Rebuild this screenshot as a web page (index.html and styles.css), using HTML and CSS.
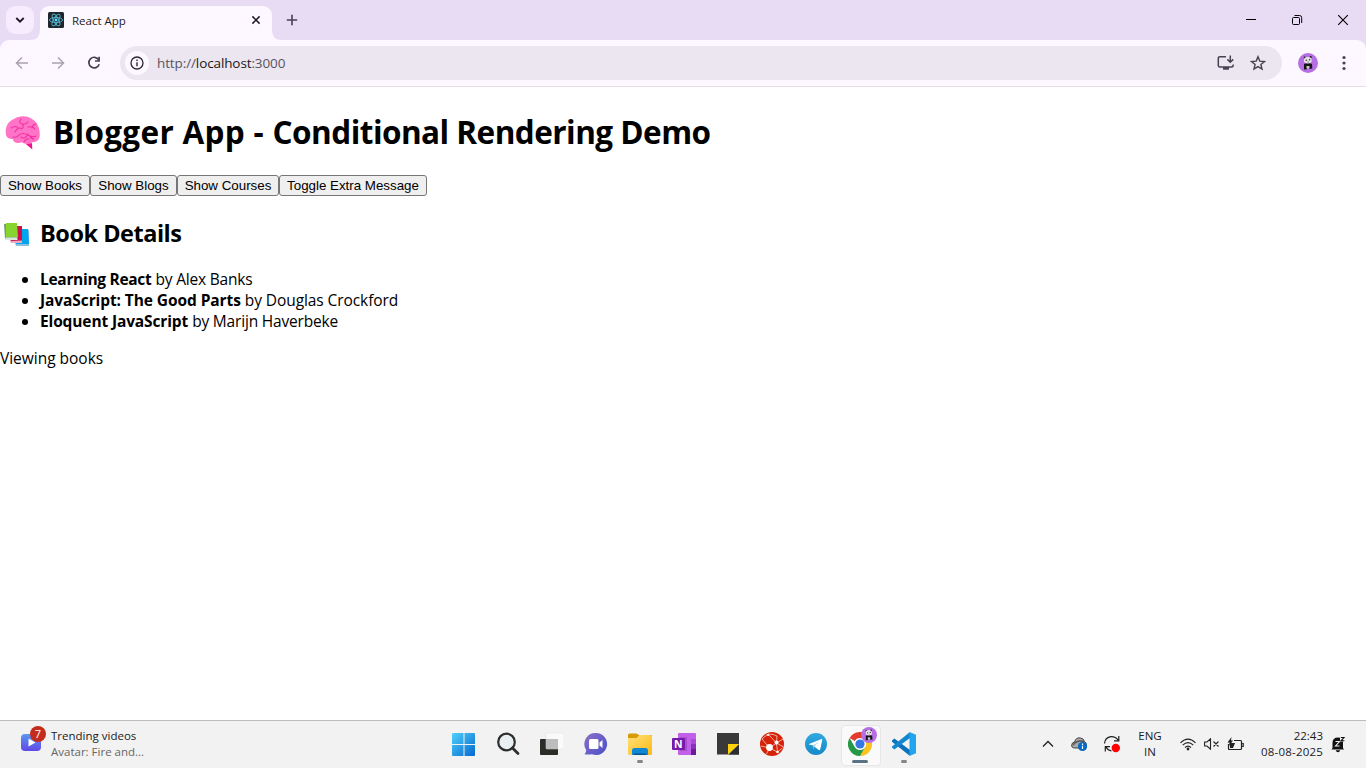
FILE: index.html
```html
<!DOCTYPE html>
<html lang="en">
<head>
<meta charset="utf-8">
<title>React App</title>
<link rel="stylesheet" href="styles.css">
</head>
<body>
<svg width="0" height="0" class="defs">
  <defs>
    <linearGradient id="gWin" x1="0" y1="0" x2="1" y2="1"><stop offset="0" stop-color="#4fd0fb"/><stop offset="1" stop-color="#0669cd"/></linearGradient>
    <linearGradient id="gChat" x1="0" y1="0" x2="1" y2="1"><stop offset="0" stop-color="#8b6fc9"/><stop offset="1" stop-color="#4a50c8"/></linearGradient>
    <linearGradient id="gVid" x1="0" y1="0" x2="0" y2="1"><stop offset="0" stop-color="#5a97ee"/><stop offset="1" stop-color="#6048e8"/></linearGradient>
    <linearGradient id="gFold" x1="0" y1="0" x2="1" y2="1"><stop offset="0" stop-color="#ffe07a"/><stop offset="1" stop-color="#fdb913"/></linearGradient>
    <linearGradient id="gTel" x1="0" y1="0" x2="0" y2="1"><stop offset="0" stop-color="#31a9e0"/><stop offset="1" stop-color="#1689c9"/></linearGradient>
    <symbol id="panda" viewBox="0 0 20 20">
      <circle cx="10" cy="10" r="10" fill="#b56ee3"/>
      <path d="M6 11q4-2 8 0l.3 4.600-3.300.4v-2.500h-2v2.800l-3 .2z" fill="#151515"/>
      <path d="M8.500 13h3v2.500h-3z" fill="#cfc4d6"/>
      <circle cx="6.800" cy="4.700" r="1.100" fill="#222"/><circle cx="12.700" cy="4.200" r="1.100" fill="#222"/>
      <ellipse cx="9.800" cy="7.200" rx="3.900" ry="3.300" fill="#e5e3e5"/>
      <circle cx="8.300" cy="7.300" r=".8" fill="#333"/><circle cx="11.600" cy="6.800" r=".8" fill="#333"/><circle cx="10.100" cy="9" r=".5" fill="#222"/>
    </symbol>
  </defs>
</svg>
<header class="tabstrip">
  <div class="tab-search"><svg width="10" height="8" viewBox="0 0 10 8"><path d="M1.300 2l3.700 3.700L8.700 2" fill="none" stroke="#1f1a24" stroke-width="1.900"/></svg></div>
  <div class="tab">
    <svg class="tab-foot" width="252" height="10" viewBox="0 0 252 10"><path d="M0 10Q10 10 10 0H242Q242 10 252 10z" fill="#fdf7ff"/></svg>
    <svg width="16" height="16" viewBox="0 0 16 16"><rect width="16" height="16" rx="1.500" fill="#20232a"/><g fill="none" stroke="#50b5cf" stroke-width=".9"><ellipse cx="8" cy="8" rx="6.600" ry="2.500"/><ellipse cx="8" cy="8" rx="6.600" ry="2.500" transform="rotate(60 8 8)"/><ellipse cx="8" cy="8" rx="6.600" ry="2.500" transform="rotate(120 8 8)"/></g><circle cx="8" cy="8" r="1.400" fill="#61dafb"/></svg>
    <span class="tab-title">React App</span>
    <svg class="tab-close" width="10" height="10" viewBox="0 0 10 10"><path d="M1.400 1.400l7.200 7.200M8.600 1.400L1.400 8.600" stroke="#1f1a24" stroke-width="1.500"/></svg>
  </div>
  <svg class="new-tab" width="12" height="12" viewBox="0 0 12 12"><path d="M6 .8v10.400M.8 6h10.400" stroke="#474151" stroke-width="1.600"/></svg>
  <div class="win-controls">
    <svg width="46" height="40" viewBox="0 0 46 40"><path d="M18 19.500h10" stroke="#000"/></svg>
    <svg width="46" height="40" viewBox="0 0 46 40"><rect x="18.500" y="17.500" width="7" height="7" rx="1" fill="none" stroke="#000"/><path d="M20.500 15.500h5q2.200 0 2.200 2.200v5.300" fill="none" stroke="#000"/></svg>
    <svg width="46" height="40" viewBox="0 0 46 40"><path d="M18.200 15.200l9.600 9.600M27.800 15.200l-9.600 9.600" stroke="#000" stroke-width="1.100"/></svg>
  </div>
</header>
<nav class="toolbar-bg">
  <div class="toolbar">
    <svg class="nav-icon" width="16" height="16" viewBox="0 0 16 16"><path d="M14 8H3M8 2.500L2.500 8 8 13.500" fill="none" stroke="#aaa3b0" stroke-width="1.500"/></svg>
    <svg class="nav-icon" width="16" height="16" viewBox="0 0 16 16"><path d="M2 8h11M8 2.500l5.500 5.500L8 13.500" fill="none" stroke="#aaa3b0" stroke-width="1.500"/></svg>
    <svg class="nav-icon" width="16" height="16" viewBox="0 0 16 16"><path d="M12.700 4.800A5.300 5.300 0 1 0 13.200 9.300" fill="none" stroke="#474151" stroke-width="1.700"/><path d="M13.100 1.800v4.200H9" fill="none" stroke="#474151" stroke-width="1.700"/></svg>
    <div class="omnibox">
      <span class="site-info"><svg width="14" height="14" viewBox="0 0 14 14"><circle cx="7" cy="7" r="6" fill="none" stroke="#2c2731" stroke-width="1.300"/><path d="M7 6.200v4M7 3.600v1.500" stroke="#2c2731" stroke-width="1.400"/></svg></span>
      <span class="url">http://<b>localhost</b>:3000</span>
      <svg class="install" width="18" height="16" viewBox="0 0 18 16"><path d="M9 1.800H3q-1.700 0-1.700 1.500v7.200q0 1.500 1.700 1.500h11.500q1.700 0 1.700-1.500V9.500" fill="none" stroke="#474151" stroke-width="1.500"/><path d="M6 12h6v2.700H6z" fill="#474151"/><path d="M13.300 0.500v6.500M10.400 4.400l2.900 2.900 2.900-2.900" fill="none" stroke="#474151" stroke-width="1.500"/></svg>
      <svg width="16" height="16" viewBox="0 0 16 16"><path d="M8 1.700l1.800 4.400 4.700.4-3.600 3 1.100 4.600L8 11.600l-4 2.500 1.100-4.600-3.600-3 4.700-.4z" fill="none" stroke="#474151" stroke-width="1.400"/></svg>
    </div>
    <svg class="profile" width="20" height="20"><use href="#panda"/></svg>
    <svg class="menu" width="4" height="16" viewBox="0 0 4 16"><g fill="#474151"><circle cx="2" cy="2.500" r="1.600"/><circle cx="2" cy="8" r="1.600"/><circle cx="2" cy="13.500" r="1.600"/></g></svg>
  </div>
</nav>
<main class="page">
  <h1><svg class="brain" width="36" height="34" viewBox="0 0 36 34"><path d="M21 27l6 .2 .3 6.300-5.800-5z" fill="#ef1090"/><path d="M1 19C-.5 12 3 5 9 3 14-.7 22-.3 26 2.500 31 4.500 35 11 34.700 18c.5 5-2 8-6.700 8-3 2.500-8 2.500-11 .2-4 1.800-9 .5-9.300-3.500C4 23.500 1.800 21.500 1 19z" fill="#ff74c6"/><g fill="none" stroke="#f22e9f" stroke-width="1.100" stroke-linecap="round"><path d="M6 12q5-3 7 0M10 16q3-6 7-3M16 3q-3 4 1 5t6-2M18 8v4M23 11q5-1 7 2M27 12q1-4 4-4M8 21q4 1 6-2 4-3 9 0t8 1M23 18q-3 6-7 3M29 23q-3 0-4-3M19 26q2-4 5-3"/></g></svg><span class="title"><span class="lead">Blogger App - </span>Conditional Rendering Demo</span></h1>
  <div class="buttons"><button class="b1">Show Books</button><button class="b2">Show Blogs</button><button class="b3">Show Courses</button><button class="b4">Toggle Extra Message</button></div>
  <h2><svg class="books" width="26" height="24" viewBox="0 0 26 24"><path d="M11 20l1-2h12V7h1v16H12z" fill="#8dbfe0"/><path d="M12 6h12l1 15H12z" fill="#00a4ef"/><path d="M5 16h13v4H7z" fill="#e5acc1"/><path d="M8 3h10v14.500l-11 .5z" fill="#cf0f4c"/><path d="M0 1h13v15H1z" fill="#7a9a7d"/><path d="M1.500 14.500h12V17H1z" fill="#d9ead9"/><path d="M2 0h11l1 14H2z" fill="#86d62f"/></svg><span>Book Details</span></h2>
  <ul>
    <li><b class="t1">Learning React</b><span class="a1">by Alex Banks</span></li>
    <li><b class="t2">JavaScript: The Good Parts</b><span class="a2">by Douglas Crockford</span></li>
    <li><b class="t3">Eloquent JavaScript</b><span class="a3">by Marijn Haverbeke</span></li>
  </ul>
  <p class="viewing">Viewing books</p>
</main>
<footer class="taskbar">
  <div class="widget">
    <div class="video"><svg width="20" height="17" viewBox="0 0 20 17"><rect width="20" height="17" rx="4" fill="url(#gVid)"/><path d="M7.500 4.500l7 4-7 4z" fill="#fff"/></svg><span class="count">7</span></div>
    <div class="news"><div>Trending videos</div><div class="sub">Avatar: Fire and...</div></div>
  </div>
  <div class="apps">
    <div class="app"><svg width="24" height="24" viewBox="0 -1 24 24"><path d="M0 1q0-1 1-1h10.500v11H0zM12.500 0H22q1 0 1 1v10H12.500zM0 12h11.500v11H1q-1 0-1-1zM12.500 12H23V22q0 1-1 1h-9.500z" fill="url(#gWin)"/></svg></div>
    <div class="app"><svg width="24" height="24" viewBox="0 0 24 24"><circle cx="10.500" cy="10" r="8.300" fill="#eaf0f1" stroke="#2c2d2d" stroke-width="2.200"/><path d="M16.500 16l5.500 5.500" stroke="#2c2d2d" stroke-width="2.800" stroke-linecap="round"/></svg></div>
    <div class="app"><svg width="24" height="24" viewBox="0 -1 24 24"><rect x="0" y="6" width="18" height="16" rx="1" fill="#2b2b28"/><rect x="6" y="0" width="18" height="16" rx="1" fill="#fafafa" stroke="#e0e0e0" stroke-width=".5"/><path d="M6 6h12v10H7q-1 0-1-1z" fill="#bdbdbd"/></svg></div>
    <div class="app"><svg width="24" height="24" viewBox="0 0 24 24"><path d="M12 1a11 11 0 1 1-4 21.200Q3.500 22.700 .5 22.200q2-2 1.500-4.500A11 11 0 0 1 12 1z" fill="url(#gChat)"/><rect x="5" y="7" width="9.500" height="10" rx="1.500" fill="#fff"/><path d="M15.500 10.500l3-2.500v8l-3-2.500z" fill="#fff"/></svg></div>
    <div class="app running"><svg width="24" height="24" viewBox="0 -1 24 24"><path d="M0 2q0-1.500 1.500-1.500h7L11 2H24v5H0z" fill="#d99a08"/><path d="M0 5h8.500l3-3H22.500Q24 2 24 3.500V20.500q0 1.500-1.500 1.500H1.500Q0 22 0 20.500z" fill="url(#gFold)"/><path d="M4 22v-4.500q0-2.500 2.500-2.500h11q2.500 0 2.500 2.500V22z" fill="#1186d4"/><path d="M6 22v-1.500h12v1.500z" fill="#065590"/></svg></div>
    <div class="app"><svg width="24" height="24" viewBox="0 0 24 24"><rect x="6" y="1" width="18" height="22" rx="1" fill="#c160e8"/><path d="M19 7h5v5h-5z" fill="#a64bda"/><path d="M19 12h5v5h-5z" fill="#8632bd"/><path d="M19 17h5v6h-5z" fill="#6a1e98"/><path d="M8 5h7v14H8z" fill="#943bb9" opacity=".5"/><rect y="6" width="13" height="12" rx="1" fill="#7719aa"/></svg><span class="onenote">N</span></div>
    <div class="app"><svg width="24" height="24" viewBox="0 0 24 24"><path d="M1 1h22v10.500L12 22.500H1z" fill="#393939"/><path d="M23 12v10.700H12z" fill="#2b2d33"/><path d="M12 12h11L12 22.500z" fill="#ffd20c"/></svg></div>
    <div class="app"><svg width="24" height="24" viewBox="0 0 24 24"><circle cx="12" cy="12" r="12" fill="#d52208"/><g stroke="#f6cfc7" stroke-width=".8" fill="none"><path d="M9.500 16L2 7 8 2l8.500 9L23 7M9.500 16l7-5 1 9-8-4M9.500 16L1 14M9.500 16l-3 6M8 2q6 0 9 2l-.5 7 7 4M17.500 20l5-4"/></g><g fill="#fff"><circle cx="9.500" cy="15.500" r="3.400"/><circle cx="16.500" cy="10.500" r="2"/><circle cx="17.500" cy="20" r="1.300"/><circle cx="8" cy="3" r="1.100"/></g></svg></div>
    <div class="app"><svg width="24" height="24" viewBox="0 0 24 24"><circle cx="12" cy="12" r="11" fill="url(#gTel)"/><path d="M5 12l12.500-5q1-.2.700 1l-2 9.500q-.4 1-1.400.5L9 13.500l-3.800-.9q-.7-.3-.2-.6z" fill="#fff"/><path d="M9 13.500l6.500-4.500-5 5.200-.6 3z" fill="#b5d8ec"/></svg></div>
    <div class="app running active"><svg width="24" height="24" viewBox="0 0 24 24"><circle cx="12" cy="12" r="12" fill="#fff"/><path d="M1.600 6A12 12 0 0 1 22.400 6H12a6 6 0 0 0-5.200 3z" fill="#e33b2e"/><path d="M22.400 6A12 12 0 0 1 12 24l5.200-9a6 6 0 0 0 0-6L12 6z" fill="#fcc31e"/><path d="M12 24A12 12 0 0 1 1.600 6l5.200 9a6 6 0 0 0 10.400 0z" fill="#279847"/><circle cx="12" cy="12" r="5.700" fill="#fff"/><circle cx="12" cy="12" r="4.600" fill="#3578e5"/></svg><svg class="badge" width="16" height="16"><use href="#panda"/></svg></div>
    <div class="app running"><svg width="24" height="24" viewBox="0 0 24 24"><path d="M0 8.500L2.300 6.500 18 18v6L0 9.800z" fill="#0a72bd"/><path d="M0 14.500L18 0v6L2.300 17.500 0 15.500z" fill="#1287d0"/><path d="M17.500 0L24 2.700v18.600L17.500 24z" fill="#23a5ee"/></svg></div>
  </div>
  <div class="tray">
    <svg class="chev" width="12" height="8" viewBox="0 0 12 8"><path d="M1 6.500l5-5 5 5" fill="none" stroke="#222" stroke-width="1.300"/></svg>
    <svg class="cloud" width="17" height="16" viewBox="0 0 17 16"><path d="M4 12Q0 12 .8 8.500 1 6.500 3.500 6 5 1 9.500 2q3 .3 4 3.500 2 1 2 4L9 12z" fill="#aaa" stroke="#333" stroke-width=".9"/><path d="M2 9Q7 3 13.500 6" stroke="#555" stroke-width="1.500" fill="none"/><circle cx="11.500" cy="10.500" r="4.600" fill="#0868c4"/><path d="M11.500 9.800v3.300M11.500 7.600v1.300" stroke="#fff" stroke-width="1.200"/></svg>
    <svg class="sync" width="18" height="18" viewBox="0 0 18 18"><g fill="none" stroke="#202020" stroke-width="1.200"><path d="M1.500 8.500Q2 2.500 8 1.700q4.500-.2 7 3.300M15.800 1v4.800H11M7 11.600H2.300v4.800M3 12q2 3.500 5.500 4"/></g><circle cx="12.800" cy="13" r="4.200" fill="red"/></svg>
    <div class="lang"><div>ENG</div><div>IN</div></div>
    <svg class="wifi" width="16" height="13" viewBox="0 0 16 13"><g fill="none" stroke="#222" stroke-width="1.100"><path d="M.5 4.800Q8-2.500 15.500 4.800M2.700 7.200Q8 2 13.300 7.200M5 9.500Q8 6.600 11 9.500"/></g><circle cx="8" cy="11" r="1.400" fill="#222"/></svg>
    <svg class="vol" width="16" height="12" viewBox="0 0 16 12"><path d="M.6 4H3L6.500.8v10.400L3 8H.6zM9.500 3.500l5 5M14.500 3.500l-5 5" fill="none" stroke="#222" stroke-width="1.100"/></svg>
    <svg class="batt" width="17" height="14" viewBox="0 0 17 14"><path d="M7 3.500h6.500q1 0 1 1v7q0 1-1 1H2.500q-1 0-1-1V7M15.200 6.500h1v3h-1" fill="none" stroke="#222" stroke-width="1.200"/><path d="M3 6h5l-2 5H3z" fill="#222"/><path d="M4.500 0L.5 5.500h2L2 9l4-5.500H4z" fill="#222"/></svg>
    <div class="clock"><div class="time">22:43</div><div class="date">08-08-2025</div></div>
    <div class="bell"><svg width="15" height="17" viewBox="0 0 15 17"><path d="M1.500 12V7Q1.500 1.500 7 1.500T12 7v5l1 1.500H.5zM4.700 14.300h4.500q-.5 1.900-2.200 1.900t-2.300-1.900z" fill="#111"/><path d="M4.500 5.500h4l-4 4.500h4" fill="none" stroke="#f3f3f3" stroke-width="1.100"/><path d="M9 .5h5v5H9z" fill="#f3f3f3"/><path d="M9.800 1.500h3.200l-3 3.300h3.400" fill="none" stroke="#111" stroke-width="1.100"/></svg></div>
  </div>
</footer>
</body>
</html>
```
FILE: styles.css
```css
* { box-sizing: border-box; }
body { margin: 0; width: 1366px; height: 768px; overflow: hidden; display: flex; flex-direction: column; background: #fff; color: #000; font-family: "Open Sans", "Noto Sans", sans-serif; }
svg { display: block; flex: none; }
.defs { position: absolute; }
.tabstrip { height: 40px; flex: none; display: flex; background: #e8dcf5; padding-left: 6px; }
.tab-search { width: 28px; height: 28px; margin: 6px 6px 0 0; border-radius: 9px; background: #f7ebfe; display: flex; align-items: center; justify-content: center; }
.tab { position: relative; width: 232px; height: 34px; margin-top: 6px; padding: 0 11px 6px 8px; border-radius: 9px 9px 0 0; background: #fdf7ff; display: flex; align-items: center; }
.tab-foot { position: absolute; left: -10px; bottom: 0; }
.tab-title { margin-left: 8px; font-size: 11.500px; letter-spacing: 0; color: #1f1a24; white-space: nowrap; }
.tab-close { margin-left: auto; }
.new-tab { margin: 14px 0 0 14px; }
.win-controls { display: flex; margin-left: auto; }
.toolbar-bg { height: 47px; flex: none; background: #e8dcf5; }
.toolbar { height: 47px; display: flex; align-items: center; padding: 0 20px 0 14px; border-radius: 9px 9px 0 0; border-bottom: 1px solid #e5e0e8; background: #fdf7ff; }
.nav-icon { margin-right: 20px; }
.nav-icon + .nav-icon + .nav-icon { margin-right: 18px; }
.omnibox { width: 1162px; height: 34px; border-radius: 17px; background: #ebe6f0; display: flex; align-items: center; padding: 0 16px 0 5px; }
.site-info { width: 24px; height: 24px; border-radius: 50%; background: #fdf7ff; display: flex; align-items: center; justify-content: center; }
.url { margin-left: 8px; font-size: 13.500px; letter-spacing: -0.110px; color: #5a5462; }
.url b { font-weight: 400; color: #1b1720; }
.install { margin: 0 15px 0 auto; }
.profile { margin-left: 16px; }
.menu { margin-left: auto; }
.page { flex: 1; }
h1 { display: flex; align-items: center; margin: 23px 0 0; padding-left: 5px; height: 44px; font-size: 31.500px; line-height: 44px; white-space: nowrap; }
.title { margin-left: 12px; letter-spacing: -0.530px; white-space: pre; }
.lead { letter-spacing: 0.320px; }
.brain { margin-top: 1px; }
.buttons { display: flex; margin-top: 21px; height: 21px; }
button { height: 21px; padding: 0; border: 1px solid #767676; border-radius: 3px; background: #efefef; color: #000; font: 13.333px/17px "Liberation Sans", Arial, sans-serif; white-space: nowrap; }
.b1 { width: 90px; }
.b2 { width: 87px; }
.b3 { width: 102px; }
.b4 { width: 148px; }
h2 { display: flex; align-items: center; margin: 21px 0 0; padding-left: 4px; height: 32px; font-size: 23.500px; line-height: 32px; }
h2 span { margin-left: 10px; letter-spacing: -0.480px; }
.books { margin-top: 3px; }
ul { margin: 20px 0 0; padding-left: 40px; font-size: 15.500px; line-height: 21px; }
li { white-space: nowrap; }
li b { display: inline-block; }
li span { margin-left: 4px; }
.t1 { letter-spacing: -0.300px; }
.a1 { letter-spacing: -0.200px; }
.t2 { letter-spacing: -0.090px; }
.a2 { letter-spacing: -0.080px; }
.t3 { letter-spacing: -0.130px; }
.a3 { letter-spacing: -0.180px; }
.viewing { margin: 16px 0 0; font-size: 15.500px; line-height: 21px; letter-spacing: -0.020px; }
.taskbar { height: 48px; flex: none; border-top: 1px solid #bdbdbd; background: #f2f2f2; display: grid; grid-template-columns: 442px 484px 440px; }
.widget { display: flex; padding: 5px 0 0 21px; }
.video { position: relative; padding-top: 8px; }
.count { position: absolute; left: 9px; top: 0; width: 16px; height: 16px; border-radius: 50%; background: #c42b1c; color: #fff; font-size: 11px; line-height: 16px; text-align: center; }
.news { margin-left: 10px; padding-top: 2px; font-size: 11.500px; line-height: 16px; color: #1b1b1b; white-space: nowrap; }
.sub { color: #666; }
.apps { display: flex; }
.app { position: relative; width: 44px; height: 46px; display: flex; align-items: center; justify-content: center; }
.running::after { content: ""; position: absolute; bottom: 4px; left: 19px; width: 6px; height: 3px; border-radius: 2px; background: #858585; }
.active::before { content: ""; position: absolute; left: 3px; top: 4px; width: 38px; height: 39px; border: 1px solid #e6e6e6; border-radius: 4px; background: #fafafa; }
.active svg { position: relative; }
.active::after { left: 14px; width: 16px; background: #5b7282; }
.active .badge { position: absolute; right: 5px; top: 6px; }
.onenote { position: absolute; left: 12px; top: 15px; color: #fff; font-size: 10.500px; font-weight: 700; line-height: 16px; }
.tray { display: flex; align-items: center; height: 46px; padding-left: 116px; font-size: 11.500px; color: #1b1b1b; }
.cloud { margin-left: 17px; }
.sync { margin-left: 15px; }
.lang { width: 30px; margin: 0 0 0 14px; text-align: center; line-height: 16px; }
.wifi { margin-left: 15px; }
.vol { margin-left: 8px; }
.batt { margin-left: 7px; }
.clock { width: 66px; margin: 0 0 0 13px; line-height: 16px; text-align: right; white-space: nowrap; }
.date { letter-spacing: 0.200px; }
.bell { margin-left: 8px; }
```
